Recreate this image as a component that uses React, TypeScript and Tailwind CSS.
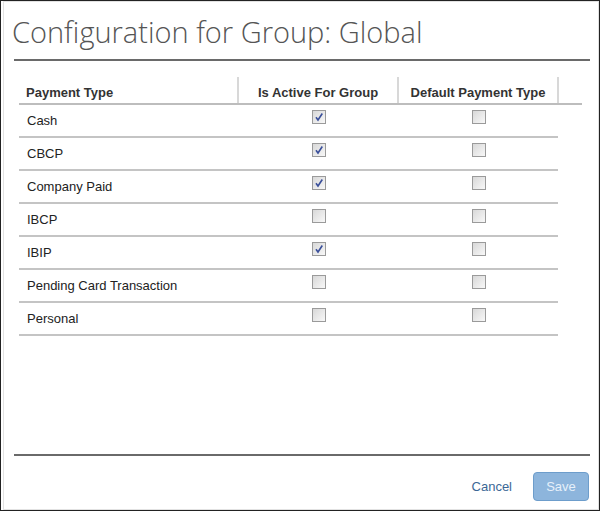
import React from "react";

interface Row {
  name: string;
  active: boolean;
  isDefault: boolean;
}

const rows: Row[] = [
  { name: "Cash", active: true, isDefault: false },
  { name: "CBCP", active: true, isDefault: false },
  { name: "Company Paid", active: true, isDefault: false },
  { name: "IBCP", active: false, isDefault: false },
  { name: "IBIP", active: true, isDefault: false },
  { name: "Pending Card Transaction", active: false, isDefault: false },
  { name: "Personal", active: false, isDefault: false },
];

function Box({ checked }: { checked: boolean }) {
  return (
    <div className="w-[14px] h-[14px] border border-[#9a9a9a] bg-gradient-to-br from-[#d8d8d8] to-[#f8f8f8] flex items-center justify-center">
      {checked && (
        <svg width="10" height="10" viewBox="0 0 10 10">
          <path d="M2 5.2 L4 8 L8.3 1.5" fill="none" stroke="#3a4f9a" strokeWidth="1.6" />
        </svg>
      )}
    </div>
  );
}

export default function App() {
  return (
    <div className="w-[600px] h-[511px] border border-[#222] bg-white font-['Liberation_Sans',Arial,sans-serif]">
      <div className="h-full border border-[#e2e2e2] ml-[2px] flex flex-col">
        <div className="pl-[10px] pr-[8px] pt-[13px]">
          <h1 className="-ml-[2px] font-['Open_Sans',sans-serif] font-light text-[29px] leading-[34px] text-[#555]">
            Configuration for Group: Global
          </h1>
          <div className="mt-[10px] h-[2px] bg-[#6a6a6a]" />
        </div>

        <div className="pl-[15px] pr-[16px] mt-[13px] flex-1">
          {/* header */}
          <div className="flex h-[31px] border-b-2 border-[#bdbdbd] text-[13px] font-bold text-[#333]">
            <div className="w-[218px] pl-[7px] flex items-end pb-[1px]">Payment Type</div>
            <div className="w-[2px] mt-[3px] bg-[#d8d8d8]" />
            <div className="w-[158px] flex items-end justify-center pb-[1px]">Is Active For Group</div>
            <div className="w-[2px] mt-[3px] bg-[#d8d8d8]" />
            <div className="w-[158px] flex items-end justify-center pb-[1px]">Default Payment Type</div>
            <div className="w-[2px] mt-[3px] bg-[#d8d8d8]" />
          </div>
          {/* body */}
          <div className="w-[539px]">
            {rows.map((r) => (
              <div
                key={r.name}
                className="flex h-[33px] border-b-2 border-[#c4c4c4] text-[13px] text-[#222]"
              >
                <div className="w-[220px] pl-[8px] flex items-center pt-[1px]">{r.name}</div>
                <div className="w-[160px] flex justify-center pt-[5px]">
                  <Box checked={r.active} />
                </div>
                <div className="w-[159px] flex justify-center pt-[5px]">
                  <Box checked={r.isDefault} />
                </div>
              </div>
            ))}
          </div>
        </div>

        <div className="pl-[10px] pr-[8px]">
          <div className="h-[2px] bg-[#6a6a6a]" />
          <div className="flex justify-end items-center gap-[21px] pt-[16px] pb-[8px] pr-[1px]">
            <button className="text-[13px] text-[#3b6796]">Cancel</button>
            <button className="w-[56px] h-[29px] rounded-[4px] border border-[#6d9dcb] bg-[#8db5dc] text-[13px] text-[#e6f0fa]">
              Save
            </button>
          </div>
        </div>
      </div>
    </div>
  );
}
